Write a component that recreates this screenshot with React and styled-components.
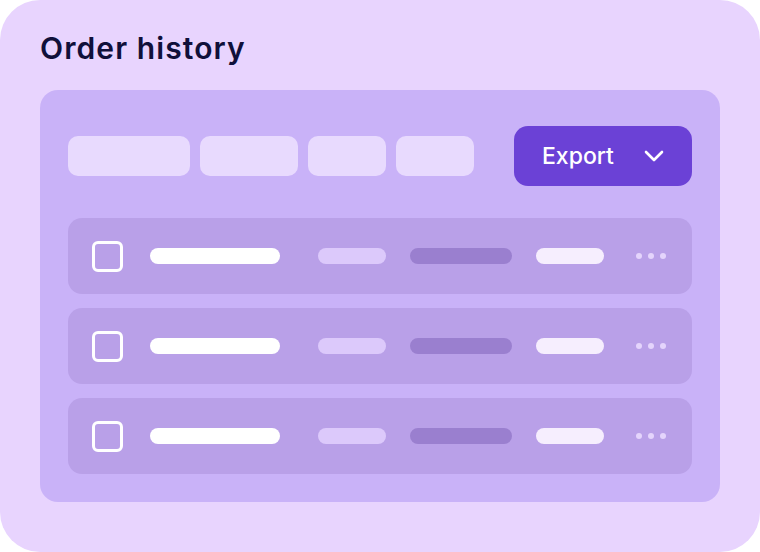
import React from 'react';
import styled, { createGlobalStyle } from 'styled-components';

const GlobalStyle = createGlobalStyle`
  html, body {
    margin: 0;
    padding: 0;
    background: #ffffff;
  }
  body {
    font-family: Inter, "Noto Sans", sans-serif;
  }
`;

const Card = styled.div`
  width: 760px;
  height: 552px;
  box-sizing: border-box;
  border-radius: 40px;
  background: #e8d4fe;
  padding: 28px 40px 50px;
  display: flex;
  flex-direction: column;
`;

const Title = styled.h1`
  margin: 0;
  height: 62px;
  font-size: 30px;
  line-height: 40px;
  font-weight: 600;
  letter-spacing: 1.1px;
  color: #10103a;
`;

const Panel = styled.div`
  flex: 1;
  border-radius: 18px;
  background: #c9b2f8;
  padding: 36px 28px 28px;
  display: flex;
  flex-direction: column;
`;

const Toolbar = styled.div`
  display: flex;
  align-items: center;
  justify-content: space-between;
  height: 60px;
  margin-bottom: 32px;
`;

const Filters = styled.div`
  display: flex;
  gap: 10px;
`;

const Filter = styled.div`
  width: ${p => p.$w}px;
  height: 40px;
  border-radius: 10px;
  background: #e8dafe;
`;

const ExportButton = styled.button`
  width: 178px;
  height: 60px;
  border: none;
  border-radius: 14px;
  background: #6b41d6;
  color: #ffffff;
  font-family: Inter, "Noto Sans", sans-serif;
  font-size: 23px;
  font-weight: 500;
  display: flex;
  align-items: center;
  padding: 0 28px;
  justify-content: space-between;
  cursor: pointer;
`;

const Rows = styled.div`
  display: flex;
  flex-direction: column;
  gap: 14px;
`;

const Row = styled.div`
  height: 76px;
  border-radius: 14px;
  background: #b9a0e8;
  display: flex;
  align-items: center;
  padding-left: 24px;
`;

const Checkbox = styled.div`
  width: 31px;
  height: 31px;
  box-sizing: border-box;
  border: 3px solid #ffffff;
  border-radius: 6px;
`;

const Bar = styled.div`
  width: ${p => p.$w}px;
  height: 16px;
  border-radius: 8px;
  margin-left: ${p => p.$ml}px;
  background: ${p => p.$c};
`;

const Dots = styled.div`
  display: flex;
  gap: 6px;
  margin-left: 32px;
`;

const Dot = styled.span`
  width: 6px;
  height: 6px;
  border-radius: 50%;
  background: #e4d4fc;
`;

const Chevron = () => (
  <svg width="20" height="12" viewBox="0 0 20 12" fill="none">
    <path d="M2 2l8 8 8-8" stroke="#ffffff" strokeWidth="2.6" strokeLinecap="round" strokeLinejoin="round" />
  </svg>
);

const OrderRow = () => (
  <Row>
    <Checkbox />
    <Bar $w={130} $ml={27} $c="#ffffff" />
    <Bar $w={68} $ml={38} $c="#dcc9fb" />
    <Bar $w={102} $ml={24} $c="#9a7fcf" />
    <Bar $w={68} $ml={24} $c="#f6eefe" />
    <Dots>
      <Dot />
      <Dot />
      <Dot />
    </Dots>
  </Row>
);

export default function App() {
  return (
    <>
      <GlobalStyle />
      <Card>
        <Title>Order history</Title>
        <Panel>
          <Toolbar>
            <Filters>
              <Filter $w={122} />
              <Filter $w={98} />
              <Filter $w={78} />
              <Filter $w={78} />
            </Filters>
            <ExportButton>
              Export
              <Chevron />
            </ExportButton>
          </Toolbar>
          <Rows>
            <OrderRow />
            <OrderRow />
            <OrderRow />
          </Rows>
        </Panel>
      </Card>
    </>
  );
}
